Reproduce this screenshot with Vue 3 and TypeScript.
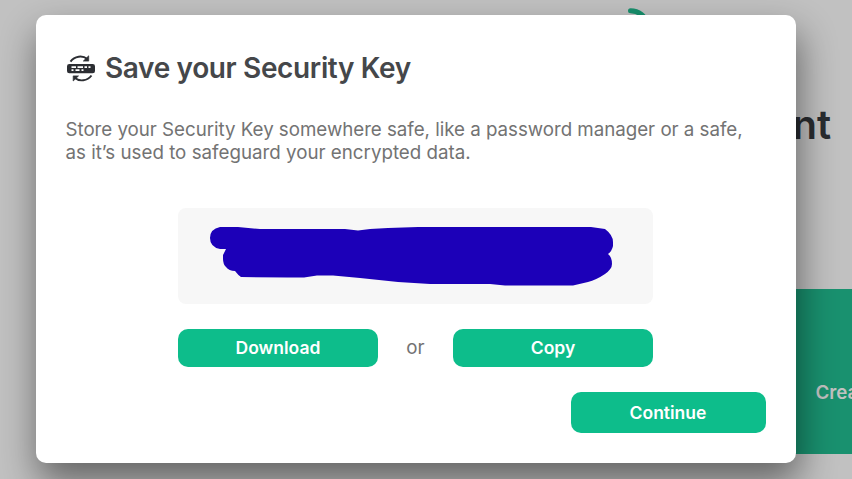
<script setup lang="ts">
import { ref } from 'vue'

const title = ref<string>('Save your Security Key')
</script>

<template>
  <div class="screen">
    <div class="page" aria-hidden="true">
      <svg class="logo" width="40" height="24" viewBox="0 0 40 24">
        <path d="M10.5 10.7C18 10.7 25 15 29 26" fill="none" stroke="#17906d" stroke-width="5" stroke-linecap="round" />
      </svg>
      <h1 class="headline">nt</h1>
      <div class="tile"><span>Crea</span></div>
    </div>

    <main class="dialog" role="dialog">
      <header class="heading">
        <svg class="icon" width="30" height="30" viewBox="0 0 30 30">
          <rect x="1" y="11" width="28" height="9.3" rx="2.3" fill="#2c2e33" />
          <path d="M5.5 14.1H10M11.5 14.1H17M18.5 14.1H21M22.5 14.1H24.5M5.5 17.2H7.5M9.5 17.2H13.5M15.5 17.2H17.5" stroke="#fff" stroke-width="1.7" fill="none" />
          <path d="M4.5 8.6C8.5 3 16.5 2 21.3 6M25.5 22.5C21.3 28 13.5 29 8.7 24.8" fill="none" stroke="#2c2e33" stroke-width="1.9" />
          <path d="M22.7 2.8V8.1H17.3ZM7.2 28V22.9H12.5Z" fill="#2c2e33" stroke="#2c2e33" stroke-width=".7" stroke-linejoin="round" />
        </svg>
        <h2>{{ title }}</h2>
      </header>
      <p class="description"><span class="first-line">Store your Security Key somewhere safe, like a password manager or a safe,</span><br>as it’s used to safeguard your encrypted data.</p>
      <section class="key-area">
        <div class="key">
          <svg width="475" height="96" viewBox="0 0 475 96">
            <path d="M42 19H60L82 21H167L180 22.500L192 21L210 20L240 19H413L420 20L427 21Q435 27 435 34V38Q434 43 430 46Q434 49 434 56Q434 61 427 66Q418 72 410 74L395 77.500H327L312 76H252L220 74L182 70L155 67.500H139L126 69.500H110L63 69Q60 67 57 63Q51 63 48 59Q45 56 45 51V47L48 41H42Q32 39 32 30Q32 21 42 19Z" fill="#1c00b8" />
          </svg>
        </div>
        <div class="choices">
          <button><span>Download</span></button>
          <span class="or">or</span>
          <button><span>Copy</span></button>
        </div>
      </section>
      <footer><button class="continue">Continue</button></footer>
    </main>
  </div>
</template>

<style>
body {
  margin: 0;
  overflow: hidden;
}
</style>

<style scoped>
.screen {
  position: relative;
  box-sizing: border-box;
  width: 852px;
  height: 479px;
  padding: 15px 56px 16px 36px;
  overflow: hidden;
  background: #c1c1c1;
  font-family: Inter, sans-serif;
}
.page {
  position: absolute;
  inset: 0;
}
.logo {
  position: absolute;
  left: 620px;
  top: 0;
}
.headline {
  position: absolute;
  right: 21px;
  top: 100px;
  margin: 0;
  color: #292c30;
  font-size: 40px;
  line-height: 50px;
  font-weight: 600;
  white-space: nowrap;
}
.tile {
  position: absolute;
  left: 780px;
  top: 289px;
  box-sizing: border-box;
  width: 200px;
  height: 165px;
  padding: 92px 0 0 35.5px;
  background: #19916f;
  color: #c1c1c1;
  font-size: 18.75px;
  line-height: 23px;
  font-weight: 600;
  white-space: nowrap;
}
.dialog {
  position: relative;
  box-sizing: border-box;
  width: 760px;
  height: 448px;
  padding: 38px 30px 30px;
  background: #fff;
  border-radius: 10px;
  box-shadow: 2.5px 18.75px 37.5px rgba(0, 0, 0, .48);
}
.heading {
  display: flex;
  align-items: center;
  gap: 9px;
  height: 30px;
}
h2 {
  margin: 0;
  color: #45474a;
  font-size: 28px;
  line-height: 30px;
  font-weight: 600;
  letter-spacing: -.36px;
}
.description {
  margin: 35px 0 0 -.5px;
  color: #737373;
  font-size: 18.75px;
  line-height: 23px;
  white-space: nowrap;
}
.first-line {
  letter-spacing: -.035px;
}
.key-area {
  width: 475px;
  margin: 44px auto 0 112px;
}
.key {
  height: 96px;
  overflow: hidden;
  border-radius: 8px;
  background: #f7f7f7;
}
.key svg {
  display: block;
}
.choices {
  display: flex;
  align-items: center;
  justify-content: space-between;
  margin-top: 25px;
  color: #737373;
  font-size: 18.75px;
}
.or {
  padding-bottom: 2px;
}
button {
  width: 200px;
  height: 38px;
  padding: 0 0 2px;
  border: 0;
  border-radius: 10px;
  background: #0dbd8b;
  color: #fff;
  font-family: inherit;
  font-size: 17.5px;
  font-weight: 600;
}
footer {
  display: flex;
  justify-content: flex-end;
  margin-top: 25px;
}
.continue {
  width: 195px;
  height: 41px;
  padding: 0 1px 0 0;
}
</style>
